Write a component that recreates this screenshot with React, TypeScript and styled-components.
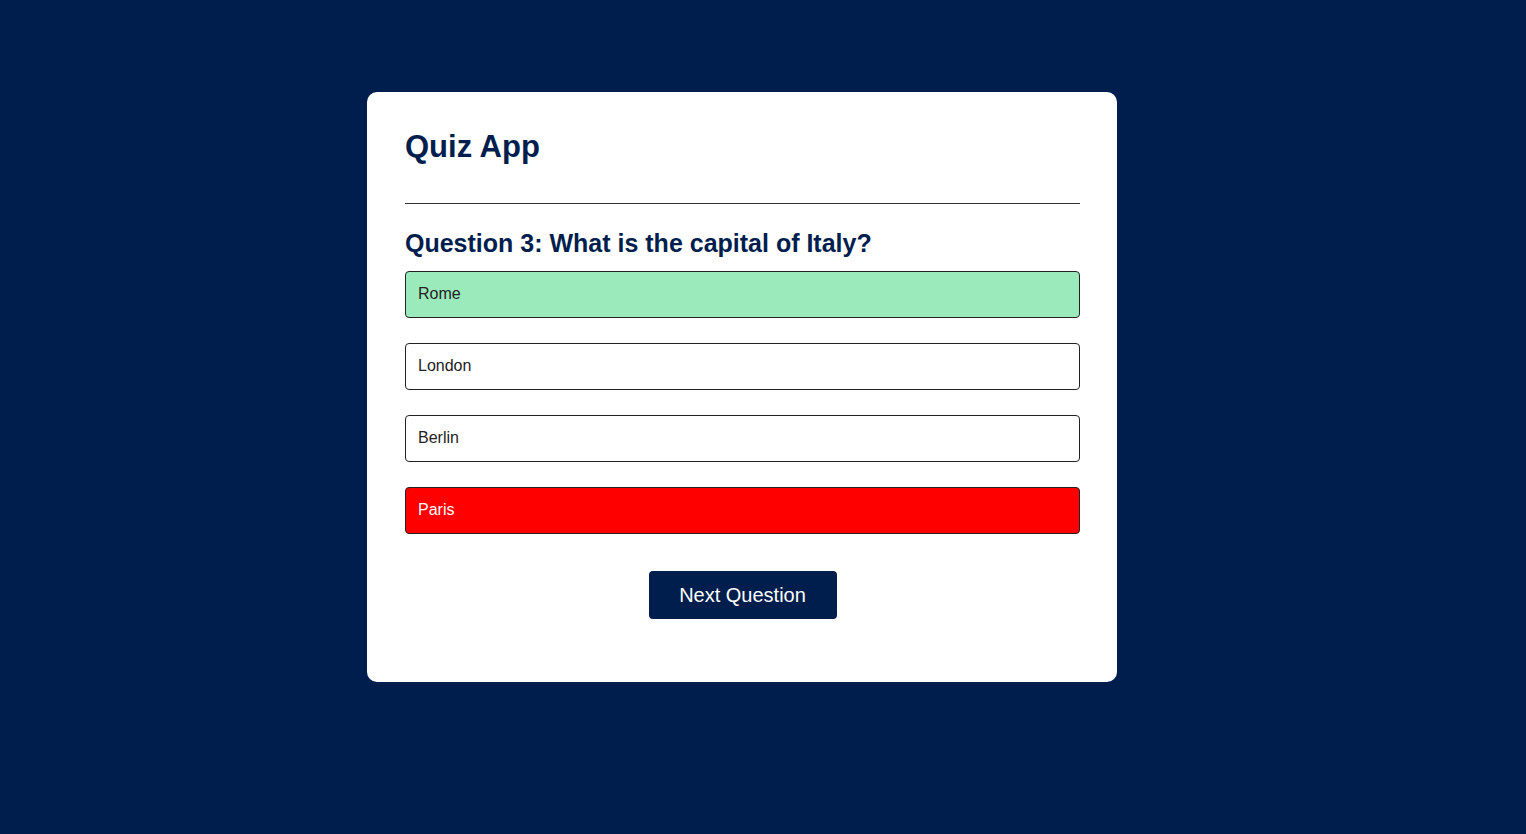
import React, { useState } from 'react'
import styled, { createGlobalStyle } from 'styled-components'

const GlobalStyle = createGlobalStyle`
  * { box-sizing: border-box; }
  body {
    margin: 0;
    background: #001e4d;
    font-family: "Liberation Sans", Arial, sans-serif;
  }
`

const Page = styled.div`
  display: flex;
  justify-content: center;
  align-items: flex-start;
  padding: 92px 42px 0 0;
  min-height: 834px;
`

const Card = styled.div`
  width: 750px;
  background: #fff;
  border-radius: 10px;
  padding: 37px 37px 63px 38px;
`

const Title = styled.h1`
  margin: 0;
  font-size: 31px;
  font-weight: 700;
  color: #001e4d;
`

const Divider = styled.hr`
  margin: 38px 0 0;
  border: 0;
  border-top: 1px solid #333;
`

const Question = styled.h2`
  margin: 25px 0 0;
  font-size: 25px;
  font-weight: 700;
  color: #001e4d;
`

const AnswerList = styled.div`
  display: flex;
  flex-direction: column;
  gap: 25px;
  margin-top: 13px;
`

type State = 'correct' | 'wrong' | 'idle'

const Answer = styled.button<{ $state: State }>`
  width: 100%;
  height: 47px;
  padding: 0 12px 2px;
  text-align: left;
  font-family: inherit;
  font-size: 16px;
  border: 1px solid #222;
  border-radius: 4px;
  cursor: pointer;
  background: ${(p) => (p.$state === 'correct' ? '#9aeabc' : p.$state === 'wrong' ? '#ff0000' : '#fff')};
  color: ${(p) => (p.$state === 'wrong' ? '#fff' : '#222')};
`

const Footer = styled.div`
  display: flex;
  justify-content: center;
  margin-top: 37px;
`

const NextButton = styled.button`
  width: 188px;
  height: 48px;
  padding: 0;
  background: #001e4d;
  color: #fff;
  font-family: inherit;
  font-size: 20px;
  border: 0;
  border-radius: 4px;
  cursor: pointer;
`

const answers = [
  { text: 'Rome', correct: true },
  { text: 'London', correct: false },
  { text: 'Berlin', correct: false },
  { text: 'Paris', correct: false },
]

export default function App() {
  const [picked] = useState('Paris')

  const stateOf = (a: { text: string; correct: boolean }): State => {
    if (a.correct) return 'correct'
    if (a.text === picked) return 'wrong'
    return 'idle'
  }

  return (
    <>
      <GlobalStyle />
      <Page>
        <Card>
          <Title>Quiz App</Title>
          <Divider />
          <Question>Question 3: What is the capital of Italy?</Question>
          <AnswerList>
            {answers.map((a) => (
              <Answer key={a.text} $state={stateOf(a)}>
                {a.text}
              </Answer>
            ))}
          </AnswerList>
          <Footer>
            <NextButton>Next Question</NextButton>
          </Footer>
        </Card>
      </Page>
    </>
  )
}
